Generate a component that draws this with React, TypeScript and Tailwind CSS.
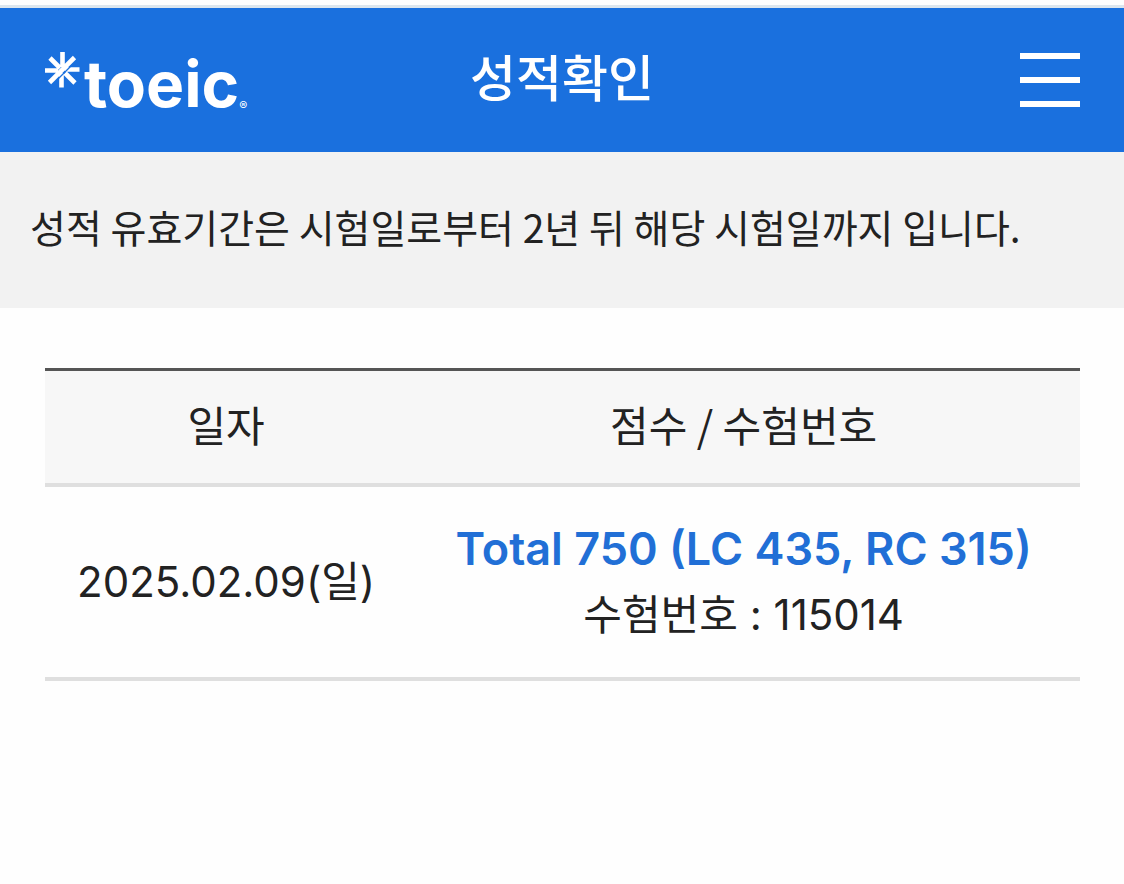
type Result = {
  id: string;
  date: string;
  total: number;
  lc: number;
  rc: number;
};

const results: Result[] = [
  { id: '115014', date: '2025.02.09(일)', total: 750, lc: 435, rc: 315 },
];

export default function App() {
  return (
    <div className="min-h-screen bg-[#fefefe] pt-[5px] font-[Inter,'Noto_Sans_CJK_KR',sans-serif] text-[#222]">
      <header className="grid h-[147px] grid-cols-3 items-center border-t-3 border-[#dce6ee] bg-[#1a70de] px-11 text-white">
        <Logo />
        <h1 className="pb-0.5 text-center text-[50px] leading-[60px] font-medium">성적확인</h1>
        <button type="button" aria-label="메뉴" className="flex flex-col gap-[18px] justify-self-end">
          <span className="h-[6px] w-[60px] bg-white" />
          <span className="h-[6px] w-[60px] bg-white" />
          <span className="h-[6px] w-[60px] bg-white" />
        </button>
      </header>

      <p className="bg-[#f2f2f2] px-[30px] pt-11 pb-13 font-['Noto_Sans_CJK_KR',sans-serif] text-[39px] leading-[60px]">
        성적 유효기간은 시험일로부터 2년 뒤 해당 시험일까지 입니다.
      </p>

      <main className="pt-[60px] pr-11 pl-[45px]">
        <table className="w-full border-separate border-spacing-0 text-center text-[42px] leading-[66px]">
          <thead className="font-['Noto_Sans_CJK_KR',sans-serif]">
            <tr className="bg-[#f7f7f7]">
              <th className="w-[35%] border-t-3 border-b-4 border-t-[#555] border-b-[#dfdfdf] pt-5 pb-[26px] font-normal">
                일자
              </th>
              <th className="border-t-3 border-b-4 border-t-[#555] border-b-[#dfdfdf] pt-5 pb-[26px] font-normal">
                점수 / 수험번호
              </th>
            </tr>
          </thead>
          <tbody>
            {results.map((r) => (
              <tr key={r.id}>
                <td className="border-b-4 border-[#dfdfdf] py-[29px]">{r.date}</td>
                <td className="border-b-4 border-[#dfdfdf] py-[29px]">
                  <div className="text-[45px] font-semibold text-[#216fd6]">
                    Total {r.total} (LC {r.lc}, RC {r.rc})
                  </div>
                  <div>수험번호 : {r.id}</div>
                </td>
              </tr>
            ))}
          </tbody>
        </table>
      </main>
    </div>
  );
}

function Logo() {
  return (
    <a href="#" aria-label="toeic" className="flex items-start pt-2">
      <svg viewBox="0 0 36 36" className="h-9 w-9" fill="none" stroke="currentColor" strokeWidth="4.6">
        <path d="M18.5 0V15M17.5 21V35.5M1 18.5H14M21 17.5H35.5M6 6L16 16M21 21L31 31M30.5 5.5L5.5 30.5" />
        <path d="M13 28L29 12" stroke="#1a70de" strokeWidth="1.2" />
      </svg>
      <span className="ml-1 text-[64px] leading-[64px] font-bold">toeic</span>
      <span className="self-end text-[12px] leading-5">®</span>
    </a>
  );
}
